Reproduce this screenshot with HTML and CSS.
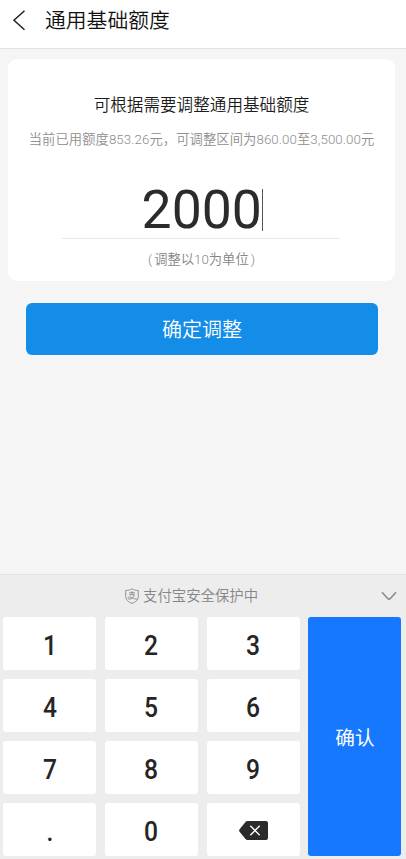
FILE: index.html
```html
<!DOCTYPE html>
<html lang="zh-CN">
<head>
<meta charset="utf-8">
<title>通用基础额度</title>
<link rel="stylesheet" href="styles.css">
</head>
<body>
<div class="screen">
  <header class="header">
    <svg class="back" viewBox="0 0 14 24" width="14" height="24"><path d="M12.500 2.700 2 12.200l10.500 9.500" fill="none" stroke="#222" stroke-width="1.5"/></svg>
    <h1 class="title">通用基础额度</h1>
  </header>
  <main class="content">
    <section class="card">
      <h2 class="card-title">可根据需要调整通用基础额度</h2>
      <p class="range">当前已用额度853.26元，可调整区间为860.00至3,500.00元</p>
      <div class="amount"><span>2000</span><i class="caret"></i></div>
      <p class="hint"><span class="paren">(</span>调整以10为单位<span class="paren">)</span></p>
    </section>
    <button class="submit">确定调整</button>
  </main>
  <section class="keyboard">
    <div class="keyboard-bar">
      <svg class="shield" viewBox="0 0 14 16" width="14" height="16" fill="none" stroke="#929292">
        <path d="M7 .8C5.200 2 3 2.500.7 2.500V8.500C.7 12 3.500 14.200 7 15.300 10.500 14.200 13.300 12 13.300 8.500V2.500C11 2.500 8.800 2 7 .8Z"/>
        <path d="M4 4.800h6M7 3.200v3.400M4.300 6.700h5.100C8.800 9.200 6.800 11.200 4.300 11.200 2.500 11.200 2.500 8.900 4.400 8.900 6.800 8.900 8.500 11 12 11.300"/>
      </svg>
      <span class="secure">支付宝安全保护中</span>
      <svg class="collapse" viewBox="0 0 16 10" width="16" height="10"><path d="M1 1.200 6.900 7.700Q8 8.700 9.100 7.700L15 1.200" fill="none" stroke="#8c8c8c" stroke-width="1.700"/></svg>
    </div>
    <div class="keys">
      <button class="key"><span>1</span></button>
      <button class="key"><span>2</span></button>
      <button class="key"><span>3</span></button>
      <button class="key confirm">确认</button>
      <button class="key"><span>4</span></button>
      <button class="key"><span>5</span></button>
      <button class="key"><span>6</span></button>
      <button class="key"><span>7</span></button>
      <button class="key"><span>8</span></button>
      <button class="key"><span>9</span></button>
      <button class="key"><span>.</span></button>
      <button class="key"><span>0</span></button>
      <button class="key delete" aria-label="删除">
        <svg viewBox="0 0 29 19" width="29" height="19"><path d="M8.500 0H27Q29 0 29 2V17Q29 19 27 19H8.500Q7.300 19 6.500 18L.6 10.800Q-.4 9.500.6 8.200L6.500 1Q7.300 0 8.500 0Z" fill="#2b2b2b"/><path d="M11.300 4.800l9.400 9.400M20.700 4.800l-9.400 9.400" stroke="#fff" stroke-width="1.300"/></svg>
      </button>
    </div>
  </section>
</div>
</body>
</html>
```
FILE: styles.css
```css
* { box-sizing: border-box; }
body { margin: 0; font-family: Roboto, "Noto Sans CJK SC", sans-serif; }
h1, h2, p { margin: 0; font-weight: 350; }
button { border: 0; padding: 0; font-family: inherit; }
svg { display: block; }

.screen {
  width: 406px;
  height: 859px;
  display: flex;
  flex-direction: column;
  background: #f5f5f5;
  overflow: hidden;
}
.header {
  height: 49px;
  display: flex;
  padding: 8px 0 0 12px;
  background: #fff;
  border-bottom: 1px solid #e2e2e2;
}
.title {
  margin: 1px 0 0 19px;
  font-size: 20.8px;
  line-height: 25px;
  color: #111;
}
.content { flex: 1; padding: 10px 10px 0 8px; }
.card {
  height: 222px;
  width: 387px;
  padding-top: 35px;
  border-radius: 9px;
  background: #fff;
  text-align: center;
}
.card-title { font-size: 16.6px; line-height: 24px; color: #1c1c1c; }
.range {
  margin-top: 12px;
  font-size: 13.3px;
  line-height: 20px;
  letter-spacing: .08px;
  white-space: nowrap;
  color: #8e8e8e;
}
.amount {
  display: flex;
  justify-content: center;
  align-items: center;
  width: 278px;
  height: 60px;
  margin: 29px 0 0 54px;
  padding: 3px 0 0 3px;
  border-bottom: 1px solid #e9e9e9;
  font-size: 53.500px;
  line-height: 60px;
  color: #2b2b2b;
}
.caret { width: 1.500px; height: 42px; background: #555; }
.hint { margin-top: 11px; font-size: 13.3px; line-height: 20px; color: #858585; }
.paren { margin: 0 2px; }
.submit {
  display: block;
  width: 352px;
  height: 52px;
  margin: 23px 0 0 18px;
  padding-bottom: 2px;
  border-radius: 6px;
  background: #138de8;
  color: #fff;
  font-size: 20px;
  font-weight: 350;
}
.card + .submit { margin-top: 22px; }
.keyboard { height: 285px; background: #ededed; border-top: 1px solid #e1e1e1; }
.keyboard-bar {
  height: 42px;
  display: flex;
  align-items: center;
  padding: 0 9px 0 125px;
  font-size: 14.4px;
  font-weight: 350;
  color: #868686;
}
.shield { margin-right: 4px; }
.secure { line-height: 20px; padding-top: 1px; }
.collapse { margin-left: auto; }
.keys {
  display: grid;
  grid-template-columns: 93px 93px 93px 93px;
  grid-template-rows: repeat(4, 53px);
  gap: 9px 8.8px;
  padding-left: 3px;
}
.key {
  display: flex;
  align-items: center;
  justify-content: center;
  border-radius: 3px;
  background: #fff;
  color: #252525;
  font-size: 28px;
  font-weight: 500;
  padding-top: 4px;
}
.key span { transform: scaleX(.88); }
.delete { padding: 1px 0 0; }
.confirm {
  grid-column: 4;
  grid-row: 1 / span 4;
  padding-top: 0;
  background: #1677ff;
  color: #fff;
  font-size: 19.7px;
  font-weight: 400;
}
```
